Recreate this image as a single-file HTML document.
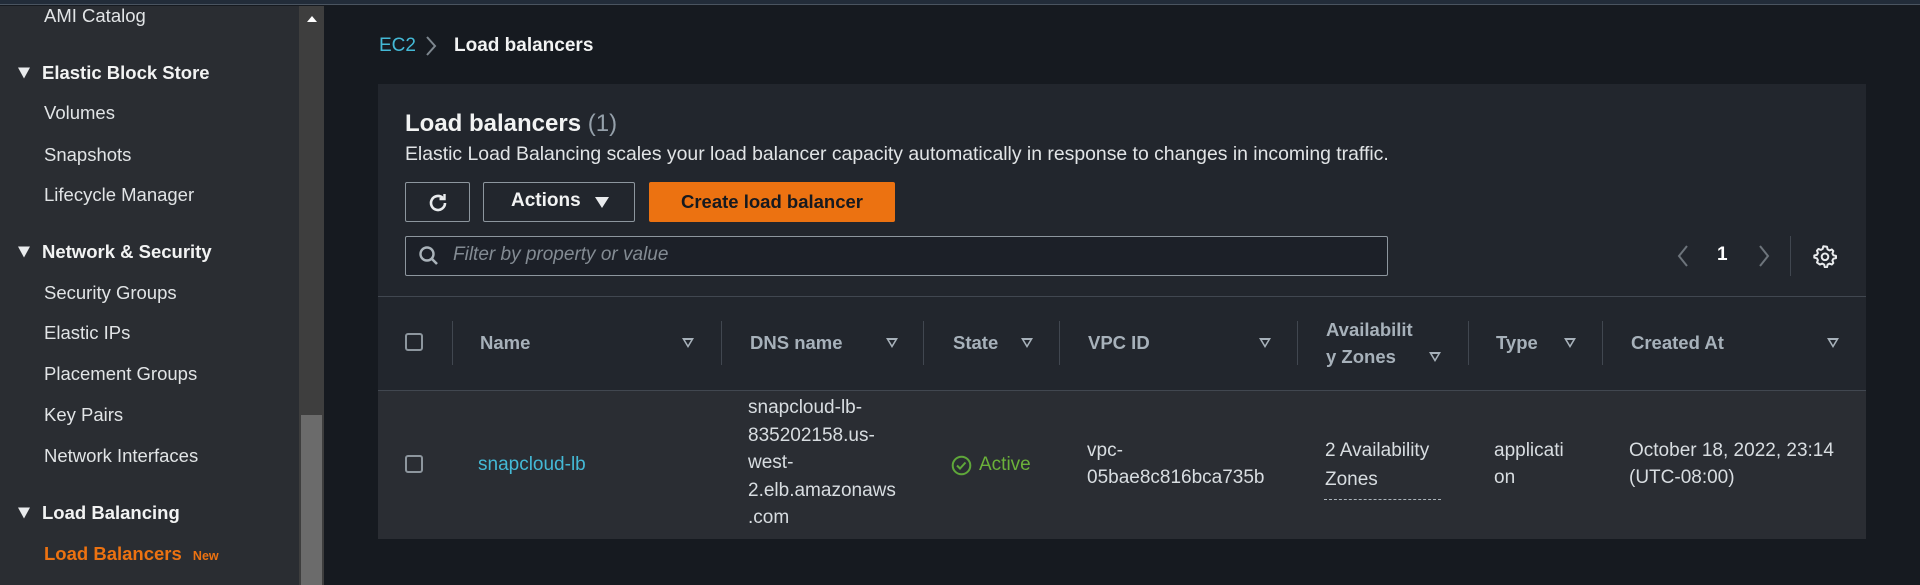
<!DOCTYPE html>
<html><head><meta charset="utf-8"><style>
*{margin:0;padding:0;box-sizing:border-box}
body{width:1920px;height:585px;overflow:hidden;background:#161a20;font-family:"Liberation Sans",sans-serif;position:relative;color:#d5dbdb}
.a{position:absolute;white-space:nowrap}
.side{position:absolute;left:0;top:0;width:299px;height:585px;background:#2a2d32}
.si{position:absolute;left:44px;font-size:18.5px;color:#e1e4e6;transform:translateY(-50%);white-space:nowrap}
.sh{position:absolute;left:42px;font-size:18.5px;font-weight:bold;color:#f2f3f3;transform:translateY(-50%);white-space:nowrap}
.tri{position:absolute;left:18px;width:0;height:0;border-left:6px solid transparent;border-right:6px solid transparent;border-top:11px solid #e9ebed;transform:translateY(-50%)}
.hd{position:absolute;font-size:18.5px;font-weight:bold;color:#a7b1ba;transform:translateY(-50%);white-space:nowrap}
.ft{position:absolute;width:0;height:0;border-left:6px solid transparent;border-right:6px solid transparent;border-top:10px solid #a7b1ba;transform:translateY(-50%)}
.ft::after{content:"";position:absolute;left:-3px;top:-8px;border-left:3px solid transparent;border-right:3px solid transparent;border-top:5px solid #22262d}
.dv{position:absolute;top:321px;width:1px;height:44px;background:#414750}
.td{position:absolute;font-size:19px;color:#d8dde1;line-height:27px;white-space:nowrap}
.cb{position:absolute;left:405px;width:18px;height:18px;border:2px solid #8d969e;border-radius:3px}
</style></head><body>
<div class="a" style="left:0;top:0;width:1920px;height:5px;background:#222c39;border-bottom:1px solid #4a5460"></div>
<div class="side" style="top:6px;height:579px"></div>
<div class="si" style="top:16px">AMI Catalog</div>
<div class="tri" style="top:73px"></div><div class="sh" style="top:73px">Elastic Block Store</div>
<div class="si" style="top:113px">Volumes</div>
<div class="si" style="top:155px">Snapshots</div>
<div class="si" style="top:195px">Lifecycle Manager</div>
<div class="tri" style="top:252px"></div><div class="sh" style="top:252px">Network &amp; Security</div>
<div class="si" style="top:293px">Security Groups</div>
<div class="si" style="top:333px">Elastic IPs</div>
<div class="si" style="top:374px">Placement Groups</div>
<div class="si" style="top:415px">Key Pairs</div>
<div class="si" style="top:456px">Network Interfaces</div>
<div class="tri" style="top:513px"></div><div class="sh" style="top:513px">Load Balancing</div>
<div class="si" style="top:554px;color:#ec7211;font-weight:bold">Load Balancers <span style="font-size:12.5px;margin-left:6px">New</span></div>
<div class="a" style="left:299px;top:6px;width:25px;height:579px;background:#3e3e3e"></div>
<div class="a" style="left:307px;top:16px;border-left:5px solid transparent;border-right:5px solid transparent;border-bottom:6px solid #fff"></div>
<div class="a" style="left:301px;top:415px;width:21px;height:170px;background:#6b6b6b"></div>

<div class="a" style="left:379px;top:35px;font-size:19px;color:#44b9d6">EC2</div>
<svg class="a" style="left:424px;top:35px" width="14" height="22"><path d="M3 2 L11 11 L3 20" stroke="#7d868e" stroke-width="2" fill="none"/></svg>
<div class="a" style="left:454px;top:35px;font-size:19px;font-weight:bold;color:#f2f3f3">Load balancers</div>

<div class="a" style="left:378px;top:84px;width:1488px;height:455px;background:#22262d;border-bottom:1px solid #3a4048"></div>
<div class="a" style="left:378px;top:390px;width:1488px;height:149px;background:#2a2d33"></div>
<div class="a" style="left:378px;top:296px;width:1488px;height:1px;background:#414750"></div>
<div class="a" style="left:378px;top:390px;width:1488px;height:1px;background:#414750"></div>

<div class="a" style="left:405px;top:110px;font-size:24px;font-weight:bold;color:#f2f3f3">Load balancers <span style="font-weight:normal;color:#95a0aa">(1)</span></div>
<div class="a" style="left:405px;top:143px;font-size:19.4px;color:#e1e4e6">Elastic Load Balancing scales your load balancer capacity automatically in response to changes in incoming traffic.</div>

<div class="a" style="left:405px;top:182px;width:65px;height:40px;border:1px solid #8d969e;border-radius:2px"></div>
<svg class="a" style="left:426px;top:191px" width="24" height="24" viewBox="0 0 24 24"><path d="M19 12a7 7 0 1 1-2.2-5.1" stroke="#e9ebed" stroke-width="2.6" fill="none"/><path d="M18.5 3v5h-5" stroke="#e9ebed" stroke-width="2.4" fill="none"/></svg>
<div class="a" style="left:483px;top:182px;width:152px;height:40px;border:1px solid #8d969e;border-radius:2px"></div>
<div class="a" style="left:511px;top:190px;font-size:19px;font-weight:bold;color:#f2f3f3">Actions</div>
<div class="a" style="left:595px;top:197px;border-left:7px solid transparent;border-right:7px solid transparent;border-top:11px solid #e9ebed"></div>
<div class="a" style="left:649px;top:182px;width:246px;height:40px;background:#ec7211;border-radius:2px;font-size:18.5px;font-weight:bold;color:#16191f;text-align:center;line-height:40px">Create load balancer</div>

<div class="a" style="left:405px;top:236px;width:983px;height:40px;background:#1c2028;border:1px solid #8d969e;border-radius:2px"></div>
<svg class="a" style="left:418px;top:245px" width="22" height="22" viewBox="0 0 22 22"><circle cx="9" cy="9" r="6.5" stroke="#aab3ba" stroke-width="2.4" fill="none"/><path d="M13.5 13.5 L19 19" stroke="#aab3ba" stroke-width="2.6"/></svg>
<div class="a" style="left:453px;top:244px;font-size:19px;font-style:italic;color:#838b93">Filter by property or value</div>

<svg class="a" style="left:1675px;top:244px" width="16" height="24"><path d="M12 2 L4 12 L12 22" stroke="#6d747b" stroke-width="2" fill="none"/></svg>
<div class="a" style="left:1717px;top:244px;font-size:19px;font-weight:bold;color:#fff">1</div>
<svg class="a" style="left:1756px;top:244px" width="16" height="24"><path d="M4 2 L12 12 L4 22" stroke="#6d747b" stroke-width="2" fill="none"/></svg>
<div class="a" style="left:1790px;top:236px;width:1px;height:40px;background:#414750"></div>
<svg class="a" style="left:1813px;top:244px" width="24" height="24" viewBox="0 0 24 24"><path d="M12 2.5l2 .3.6 2.6 1.8 1 2.5-.9 1.4 1.5-.9 2.5 1 1.8 2.6.6v2.2l-2.6.6-1 1.8.9 2.5-1.4 1.5-2.5-.9-1.8 1-.6 2.6h-2.2l-.6-2.6-1.8-1-2.5.9L4 18.6l.9-2.5-1-1.8-2.6-.6v-2.2l2.6-.6 1-1.8L4 6.6 5.4 5l2.5.9 1.8-1 .6-2.6z" stroke="#e9ebed" stroke-width="2" fill="none" stroke-linejoin="round"/><circle cx="12" cy="12.8" r="3.3" stroke="#e9ebed" stroke-width="2" fill="none"/></svg>

<div class="cb" style="top:333px"></div>
<div class="dv" style="left:452px"></div><div class="dv" style="left:721px"></div><div class="dv" style="left:923px"></div><div class="dv" style="left:1059px"></div><div class="dv" style="left:1297px"></div><div class="dv" style="left:1468px"></div><div class="dv" style="left:1602px"></div>
<div class="hd" style="left:480px;top:343px">Name</div><div class="ft" style="left:682px;top:343px"></div>
<div class="hd" style="left:750px;top:343px">DNS name</div><div class="ft" style="left:886px;top:343px"></div>
<div class="hd" style="left:953px;top:343px">State</div><div class="ft" style="left:1021px;top:343px"></div>
<div class="hd" style="left:1088px;top:343px">VPC ID</div><div class="ft" style="left:1259px;top:343px"></div>
<div class="hd" style="left:1326px;top:330px">Availabilit</div><div class="hd" style="left:1326px;top:357px">y Zones</div><div class="ft" style="left:1429px;top:357px"></div>
<div class="hd" style="left:1496px;top:343px">Type</div><div class="ft" style="left:1564px;top:343px"></div>
<div class="hd" style="left:1631px;top:343px">Created At</div><div class="ft" style="left:1827px;top:343px"></div>

<div class="cb" style="top:455px"></div>
<div class="td" style="left:478px;top:451px;color:#44b9d6">snapcloud-lb</div>
<div class="td" style="left:748px;top:394px;line-height:27.5px">snapcloud-lb-<br>835202158.us-<br>west-<br>2.elb.amazonaws<br>.com</div>
<svg class="a" style="left:951px;top:455px" width="21" height="21" viewBox="0 0 21 21"><circle cx="10.5" cy="10.5" r="8.8" stroke="#5fa73a" stroke-width="2" fill="none"/><path d="M6 10.5l3 3 5.5-6" stroke="#5fa73a" stroke-width="2" fill="none"/></svg>
<div class="td" style="left:979px;top:451px;color:#6bb13a">Active</div>
<div class="td" style="left:1087px;top:437px">vpc-<br>05bae8c816bca735b</div>
<div class="td" style="left:1325px;top:436px;line-height:29px">2 Availability<br>Zones</div>
<div class="a" style="left:1324px;top:499px;width:117px;border-top:1px dashed #aab3ba"></div>
<div class="td" style="left:1494px;top:437px">applicati<br>on</div>
<div class="td" style="left:1629px;top:437px">October 18, 2022, 23:14<br>(UTC-08:00)</div>
</body></html>
